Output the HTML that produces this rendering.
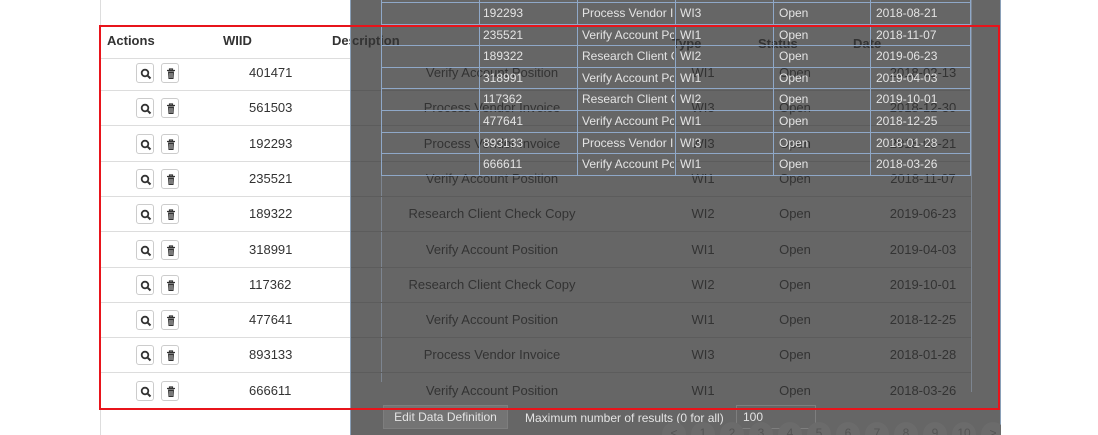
<!DOCTYPE html>
<html><head><meta charset="utf-8"><style>
*{margin:0;padding:0;box-sizing:border-box}
html{width:1098px;height:435px;overflow:hidden}
body{width:1098px;height:435px;background:#fff;position:relative;overflow:hidden;font-family:"Liberation Sans",Arial,sans-serif;font-size:13px;color:#333}
.a{position:absolute;white-space:nowrap}
.hl{position:absolute;height:1px;background:#ddd}
.btn{position:absolute;width:18px;height:20px;border:1px solid #ccc;border-radius:3px;background:#fff}
.btn svg{position:absolute;left:3px;top:4px}
.ov{position:absolute;left:350px;top:0;width:651px;height:435px;background:#666;border-left:1px solid #8aa0b8;border-right:1px solid #8aa0b8}
.d{color:#333;font-size:13px;transform:translateX(-50%)}
.s{color:#e4e4e4;font-size:12px}
</style></head><body>
<div class="a" style="left:100px;top:0;width:1px;height:435px;background:#ddd"></div>
<div class="a" style="left:107px;top:33px;font-weight:bold">Actions</div>
<div class="a" style="left:223px;top:33px;font-weight:bold">WIID</div>
<div class="a" style="left:332px;top:33px;font-weight:bold">Description</div>
<div id="left"></div>
<div class="ov"></div>
<div id="over"></div>
<div class="a" style="left:99px;top:25px;width:901px;height:385px;border:2px solid #e8141b"></div>
<script>
var ids=["401471","561503","192293","235521","189322","318991","117362","477641","893133","666611"];
var desc=["Verify Account Position","Process Vendor Invoice","Process Vendor Invoice","Verify Account Position","Research Client Check Copy","Verify Account Position","Research Client Check Copy","Verify Account Position","Process Vendor Invoice","Verify Account Position"];
var ty=["WI1","WI3","WI3","WI1","WI2","WI1","WI2","WI1","WI3","WI1"];
var dt=["2018-02-13","2018-12-30","2018-08-21","2018-11-07","2019-06-23","2019-04-03","2019-10-01","2018-12-25","2018-01-28","2018-03-26"];
var h="";
var mag='<svg width="12" height="12" viewBox="0 0 12 12"><circle cx="5" cy="5" r="3.3" fill="none" stroke="#333" stroke-width="1.8"/><path d="M7.4 7.4L10.5 10.5" stroke="#333" stroke-width="2"/></svg>';
var tr='<svg width="12" height="12" viewBox="0 0 12 12"><path d="M2 2.5h8M4.5 2.5V1h3v1.5" stroke="#333" stroke-width="1.2" fill="none"/><path d="M3 3.5h6l-.5 7.5h-5z" fill="#333"/><path d="M5 5v5M7 5v5" stroke="#fff" stroke-width=".7"/></svg>';
h+='<div class="hl" style="left:101px;top:58px;width:250px"></div>';
for(var i=0;i<10;i++){var y=73+i*35.3;
 h+='<div class="btn" style="left:136px;top:'+(y-10)+'px">'+mag+'</div><div class="btn" style="left:161px;top:'+(y-10)+'px">'+tr+'</div>';
 h+='<div class="a" style="left:249px;top:'+(y-8)+'px">'+ids[i]+'</div>';
 if(i<9)h+='<div class="hl" style="left:101px;top:'+(y+17)+'px;width:250px"></div>';
}
document.getElementById('left').innerHTML=h;
var o="";
o+='<div class="a" style="left:381px;top:0;width:1px;height:382px;background:#7d8590"></div>';
o+='<div class="a" style="left:971px;top:0;width:1px;height:392px;background:#7d8590"></div>';
o+='<div class="a" style="left:352px;top:33px;font-weight:bold;color:#333">cription</div>';
o+='<div class="a" style="left:672px;top:36px;font-weight:bold;color:#333">Type</div>';
o+='<div class="a" style="left:758px;top:36px;font-weight:bold;color:#333">Status</div>';
o+='<div class="a" style="left:853px;top:36px;font-weight:bold;color:#333">Date</div>';
for(var i=0;i<10;i++){var y=73+i*35.3;
 o+='<div class="a" style="left:351px;top:'+(y+17)+'px;width:620px;height:1px;background:#5c5c5c"></div>';
 o+='<div class="a d" style="left:492px;top:'+(y-8)+'px">'+desc[i]+'</div>';
 o+='<div class="a d" style="left:703px;top:'+(y-8)+'px">'+ty[i]+'</div>';
 o+='<div class="a d" style="left:795px;top:'+(y-8)+'px">Open</div>';
 o+='<div class="a d" style="left:923px;top:'+(y-8)+'px">'+dt[i]+'</div>';
}
var sid=["192293","235521","189322","318991","117362","477641","893133","666611"];
var sd=["Process Vendor Ir","Verify Account Pc","Research Client C","Verify Account Pc","Research Client C","Verify Account Pc","Process Vendor Ir","Verify Account Pc"];
var sty=["WI3","WI1","WI2","WI1","WI2","WI1","WI3","WI1"];
var sdt=["2018-08-21","2018-11-07","2019-06-23","2019-04-03","2019-10-01","2018-12-25","2018-01-28","2018-03-26"];
var cols=[381,479,577,675,773,870,970];
for(var c=0;c<cols.length;c++)o+='<div class="a" style="left:'+cols[c]+'px;top:0;width:1px;height:175px;background:#8fa8c8"></div>';
for(var r=0;r<9;r++)o+='<div class="a" style="left:381px;top:'+(2+r*21.6)+'px;width:590px;height:1px;background:#8fa8c8"></div>';
for(var r=0;r<8;r++){var y=6+r*21.6;
 o+='<div class="a s" style="left:483px;top:'+y+'px">'+sid[r]+'</div>';
 o+='<div class="a s" style="left:582px;top:'+y+'px;width:92px;overflow:hidden">'+sd[r]+'</div>';
 o+='<div class="a s" style="left:680px;top:'+y+'px">'+sty[r]+'</div>';
 o+='<div class="a s" style="left:779px;top:'+y+'px">Open</div>';
 o+='<div class="a s" style="left:876px;top:'+y+'px">'+sdt[r]+'</div>';
}
o+='<div class="a" style="left:383px;top:405px;width:125px;height:24px;background:#747474;border:1px solid #7e7e7e;color:#e4e4e4;font-size:12px;text-align:center;line-height:22px">Edit Data Definition</div>';
o+='<div class="a s" style="left:525px;top:411px">Maximum number of results (0 for all)</div>';
o+='<div class="a" style="left:736px;top:405px;width:80px;height:24px;border:1px solid #7e7e7e;color:#e4e4e4;font-size:12px;padding-left:6px;line-height:22px">100</div>';
o+='<div class="a" style="left:350px;top:0;width:651px;height:435px;overflow:hidden" id="pg"></div>';
document.getElementById('over').innerHTML=o;
var pg=["<","1","2","3","4","5","6","7","8","9","10",">"],p="";
for(var k=0;k<pg.length;k++){var x=668+k*29-350;
 p+='<div class="a" style="left:'+(x-6)+'px;top:422px;width:24px;height:24px;border-radius:12px;background:#6b6b6b;color:#555;font-size:12px;text-align:center;line-height:22px">'+pg[k]+'</div>';}
document.getElementById('pg').innerHTML=p;
</script>
</body></html>
